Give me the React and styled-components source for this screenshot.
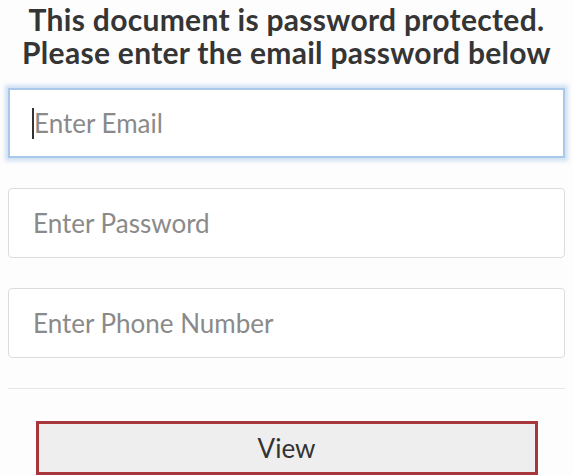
import styled, { createGlobalStyle } from "styled-components";

const GlobalStyle = createGlobalStyle`
  body {
    margin: 0;
    background: #fdfdfd;
    font-family: Lato, "Open Sans", "Liberation Sans", sans-serif;
  }
`;

export default function App() {
  const fields = [
    { placeholder: "Enter Email", type: "email", focused: true },
    { placeholder: "Enter Password", type: "password" },
    { placeholder: "Enter Phone Number", type: "tel" },
  ];

  return (
    <Page>
      <GlobalStyle />
      <Title>
        <TitleLine>This document is password protected.</TitleLine>
        <TitleLine>Please enter the email password below</TitleLine>
      </Title>
      <Form>
        {fields.map(({ placeholder, type, focused }, i) => (
          <FieldWrap key={i}>
            <Field type={type} placeholder={placeholder} $focused={focused} />
            {focused ? <Caret /> : null}
          </FieldWrap>
        ))}
      </Form>
      <Divider />
      <ViewButton type="button">View</ViewButton>
    </Page>
  );
}

const Page = styled.div`
  width: 573px;
  height: 475px;
  overflow: hidden;
  display: flex;
  flex-direction: column;
  padding: 3px 8px 0;
  box-sizing: border-box;
`;

const Title = styled.h1`
  margin: 0;
  display: flex;
  flex-direction: column;
  align-items: center;
  font-size: 30px;
  line-height: 33px;
  letter-spacing: 0.3px;
  font-weight: 700;
  color: #353535;
`;

const TitleLine = styled.span`
  display: block;
  white-space: nowrap;
`;

const Form = styled.div`
  display: flex;
  flex-direction: column;
  gap: 30px;
  margin-top: 19px;
`;

const FieldWrap = styled.div`
  position: relative;
`;

const Field = styled.input`
  width: 100%;
  height: 70px;
  box-sizing: border-box;
  padding: 0 24px;
  font-family: Lato, "Open Sans", "Liberation Sans", sans-serif;
  font-size: 26px;
  color: #444;
  background: #fff;
  outline: none;
  border-radius: ${({ $focused }) => ($focused ? "0" : "4px")};
  border: ${({ $focused }) =>
    $focused ? "2px solid #a9c8ea" : "1px solid #dcdcdc"};
  box-shadow: ${({ $focused }) =>
    $focused ? "0 0 4px 3px rgba(170, 200, 235, 0.55)" : "none"};

  &::placeholder {
    color: #8a8a8a;
  }
`;

const Caret = styled.span`
  position: absolute;
  left: 24px;
  top: 20px;
  width: 2px;
  height: 31px;
  background: #333;
`;

const Divider = styled.hr`
  width: 100%;
  margin: 30px 0 0;
  border: none;
  border-top: 1px solid #e8e8e8;
`;

const ViewButton = styled.button`
  align-self: center;
  width: 502px;
  height: 54px;
  margin-top: 32px;
  background: #eeeeef;
  border: 3px solid #a8373c;
  font-family: Lato, "Open Sans", "Liberation Sans", sans-serif;
  font-size: 26px;
  color: #333;
  cursor: pointer;
`;
